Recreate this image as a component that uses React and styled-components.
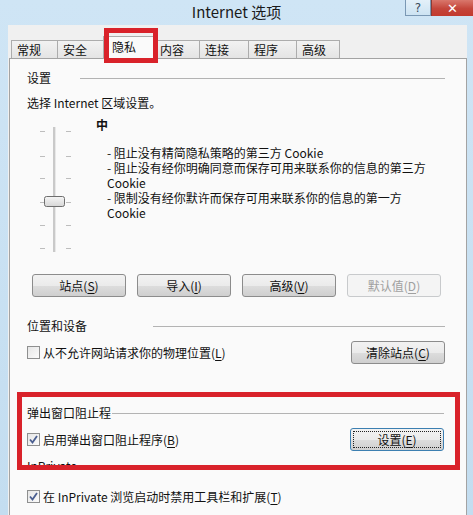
import styled, { createGlobalStyle, css } from "styled-components";

const GlobalStyle = createGlobalStyle`
  html, body {
    margin: 0;
    padding: 0;
    background: #c9e1f2;
  }
  body {
    font-family: "Noto Sans CJK SC", "Liberation Sans", sans-serif;
    font-size: 12px;
    color: #111;
  }
`;

const Window = styled.div`
  width: 473px;
  height: 515px;
  overflow: hidden;
  background: linear-gradient(180deg, #cfe5f5 0%, #c3ddf0 100%);
  display: flex;
  flex-direction: column;
`;

const TitleBar = styled.div`
  height: 25px;
  flex: none;
  display: grid;
  grid-template-columns: 1fr auto 1fr;
  align-items: start;
`;

const Title = styled.div`
  grid-column: 2;
  font-size: 15px;
  line-height: 15px;
  padding-top: 4px;
  color: #1a1a1a;
`;

const Controls = styled.div`
  grid-column: 3;
  justify-self: end;
  display: flex;
`;

const CtrlButton = styled.div`
  height: 16px;
  display: flex;
  align-items: center;
  justify-content: center;
  box-sizing: border-box;
  font-family: "DejaVu Sans", sans-serif;
  ${(p) =>
    p.$close
      ? css`
          width: 42px;
          background: linear-gradient(180deg, #d9776c 0%, #c4453a 55%, #c23a2e 100%);
          color: #fff;
          font-weight: bold;
          font-size: 13px;
          border-left: 1px solid #8c3a33;
        `
      : css`
          width: 26px;
          background: linear-gradient(180deg, #e3f0f9 0%, #cde3f2 100%);
          border: 1px solid #7a98b4;
          border-top: none;
          color: #3a4a5a;
          font-size: 12px;
        `}
`;

const Client = styled.div`
  flex: 1;
  margin: 0 6px 0 8px;
  background: #f0f0f0;
  padding-top: 11px;
  display: flex;
  flex-direction: column;
  position: relative;
`;

const TabStrip = styled.div`
  display: flex;
  align-items: flex-end;
  padding-left: 4px;
  height: 22px;
  position: relative;
  z-index: 1;
`;

const Tab = styled.div`
  box-sizing: border-box;
  width: ${(p) => p.$w || 47}px;
  padding-left: 5px;
  border: 1px solid #acacac;
  border-bottom: none;
  margin-left: -1px;
  ${(p) =>
    p.$active
      ? css`
          height: 23px;
          margin: 0 -2px -1px -3px;
          padding-left: 8px;
          background: #fafafa;
          line-height: 19px;
          position: relative;
          z-index: 2;
        `
      : css`
          height: 18px;
          line-height: 17px;
          background: linear-gradient(180deg, #f2f2f2 0%, #e4e4e4 100%);
        `}
`;

const Marker = styled.div`
  position: absolute;
  left: 96px;
  top: 3px;
  width: 54px;
  height: 35px;
  border: 5px solid #d9222a;
  box-sizing: border-box;
  z-index: 3;
`;

const Panel = styled.div`
  flex: 1;
  margin-left: 1px;
  border: 1px solid #a3a3a3;
  border-bottom: none;
  background: #fafafa;
  padding: 11px 21px 0 17px;
  display: flex;
  flex-direction: column;
`;

const Line = styled.div`
  line-height: 15px;
  margin-top: ${(p) => p.$mt || 0}px;
  font-weight: ${(p) => (p.$bold ? 700 : 400)};
`;

const GroupHead = styled.div`
  display: flex;
  align-items: center;
  line-height: 15px;
  margin-top: ${(p) => p.$mt || 0}px;
`;

const GroupLabel = styled.span`
  width: ${(p) => p.$w}px;
  flex: none;
  white-space: nowrap;
`;

const GroupRule = styled.span`
  flex: 1;
  height: 1px;
  margin-top: 2px;
  background: #b3b3b3;
`;

const SliderRow = styled.div`
  display: flex;
  margin-top: 7px;
`;

const SliderBox = styled.div`
  width: 69px;
  flex: none;
`;

const Levels = styled.div`
  display: flex;
  flex-direction: column;
`;

const Description = styled.div`
  margin-top: 13px;
  padding-left: 11px;
  max-width: 330px;
  line-height: 15px;
`;

const ButtonRow = styled.div`
  display: flex;
  gap: 11px;
  padding-left: 5px;
  margin-top: 17px;
`;

const Button = styled.div`
  box-sizing: border-box;
  width: 94px;
  height: 23px;
  border-radius: 3px;
  display: flex;
  align-items: center;
  justify-content: center;
  position: relative;
  ${(p) =>
    p.$disabled
      ? css`
          border: 1px solid #c8cacc;
          background: #f4f4f4;
          color: #a0a0a0;
        `
      : p.$focused
      ? css`
          border: 1px solid #3c7fb1;
          background: linear-gradient(180deg, #f2f2f2 0%, #ebebeb 50%, #dddddd 51%, #cfcfcf 100%);
          &::after {
            content: "";
            position: absolute;
            inset: 2px;
            border: 1px dotted #222;
          }
        `
      : css`
          border: 1px solid #8c8c8c;
          background: linear-gradient(180deg, #f2f2f2 0%, #ebebeb 50%, #dddddd 51%, #cfcfcf 100%);
        `}
  u {
    text-decoration: underline;
    text-underline-offset: 2px;
  }
`;

const OptionRow = styled.div`
  display: flex;
  align-items: center;
  justify-content: space-between;
  margin-top: ${(p) => p.$mt || 0}px;
  u {
    text-decoration: underline;
    text-underline-offset: 2px;
  }
`;

const Check = styled.label`
  display: flex;
  align-items: center;
  gap: 3px;
  line-height: 15px;
`;

const Box = styled.span`
  box-sizing: border-box;
  width: 13px;
  height: 13px;
  border: 1px solid #8e8f8f;
  background: linear-gradient(135deg, #e6e6e6 0%, #fbfbfb 100%);
  display: flex;
  align-items: center;
  justify-content: center;
`;

const Highlight = styled.div`
  box-sizing: border-box;
  margin: 28px -15px 0 -10px;
  border: 5px solid #d9222a;
  height: 78px;
  overflow: hidden;
  padding: 8px 11px 0 5px;
`;

const Checkbox = ({ checked, children }) => (
  <Check>
    <Box>
      {checked && (
        <svg width="9" height="9" viewBox="0 0 9 9">
          <path d="M1 4.5 L3.5 7.5 L8 1" fill="none" stroke="#4a5e90" strokeWidth="1.8" />
        </svg>
      )}
    </Box>
    <span>{children}</span>
  </Check>
);

const Slider = () => {
  const ticks = [14, 39, 61, 85, 108, 131];
  return (
    <svg width="69" height="137" viewBox="0 0 69 137">
      <defs>
        <linearGradient id="thumb" x1="0" y1="0" x2="0" y2="1">
          <stop offset="0" stopColor="#f6f6f6" />
          <stop offset="1" stopColor="#d6d6d6" />
        </linearGradient>
      </defs>
      <rect x="26" y="10" width="2" height="125" fill="#c9c9c9" />
      <line x1="28.5" y1="10" x2="28.5" y2="135" stroke="#e8e8e8" />
      {ticks.map((y) => (
        <g key={y} stroke="#bdbdbd">
          <line x1="13" y1={y + 0.5} x2="18" y2={y + 0.5} />
          <line x1="39" y1={y + 0.5} x2="44" y2={y + 0.5} />
        </g>
      ))}
      <rect x="17.5" y="79.5" width="20" height="10" rx="2" fill="url(#thumb)" stroke="#6e6e6e" />
    </svg>
  );
};

const tabs = [
  { label: "常规" },
  { label: "安全", w: 49 },
  { label: "隐私", active: true, w: 54 },
  { label: "内容", w: 46 },
  { label: "连接", w: 50 },
  { label: "程序", w: 49 },
  { label: "高级", w: 44 },
];

export default function App() {
  return (
    <Window>
      <GlobalStyle />
      <TitleBar>
        <Title>Internet 选项</Title>
        <Controls>
          <CtrlButton>?</CtrlButton>
          <CtrlButton $close>✕</CtrlButton>
        </Controls>
      </TitleBar>
      <Client>
        <TabStrip>
          {tabs.map((t) => (
            <Tab key={t.label} $active={t.active} $w={t.w}>
              {t.label}
            </Tab>
          ))}
        </TabStrip>
        <Marker />
        <Panel>
          <GroupHead>
            <GroupLabel $w={53}>设置</GroupLabel>
            <GroupRule />
          </GroupHead>
          <Line $mt={10}>选择 Internet 区域设置。</Line>
          <SliderRow>
            <SliderBox>
              <Slider />
            </SliderBox>
            <Levels>
              <Line $bold>中</Line>
              <Description>
                - 阻止没有精简隐私策略的第三方 Cookie
                <br />
                - 阻止没有经你明确同意而保存可用来联系你的信息的第三方 Cookie
                <br />
                - 限制没有经你默许而保存可用来联系你的信息的第一方 Cookie
              </Description>
            </Levels>
          </SliderRow>
          <ButtonRow>
            <Button>
              站点(<u>S</u>)
            </Button>
            <Button>
              导入(<u>I</u>)
            </Button>
            <Button>
              高级(<u>V</u>)
            </Button>
            <Button $disabled>
              默认值(<u>D</u>)
            </Button>
          </ButtonRow>
          <GroupHead $mt={21}>
            <GroupLabel $w={126}>位置和设备</GroupLabel>
            <GroupRule />
          </GroupHead>
          <OptionRow $mt={8}>
            <Checkbox>
              从不允许网站请求你的物理位置(<u>L</u>)
            </Checkbox>
            <Button>
              清除站点(<u>C</u>)
            </Button>
          </OptionRow>
          <Highlight>
            <GroupHead>
              <GroupLabel $w={85}>弹出窗口阻止程</GroupLabel>
              <GroupRule />
            </GroupHead>
            <OptionRow $mt={8}>
              <Checkbox checked>
                启用弹出窗口阻止程序(<u>B</u>)
              </Checkbox>
              <Button $focused>
                设置(<u>E</u>)
              </Button>
            </OptionRow>
            <Line $mt={7}>InPrivate</Line>
          </Highlight>
          <OptionRow $mt={19}>
            <Checkbox checked>
              在 InPrivate 浏览启动时禁用工具栏和扩展(<u>T</u>)
            </Checkbox>
          </OptionRow>
        </Panel>
      </Client>
    </Window>
  );
}
